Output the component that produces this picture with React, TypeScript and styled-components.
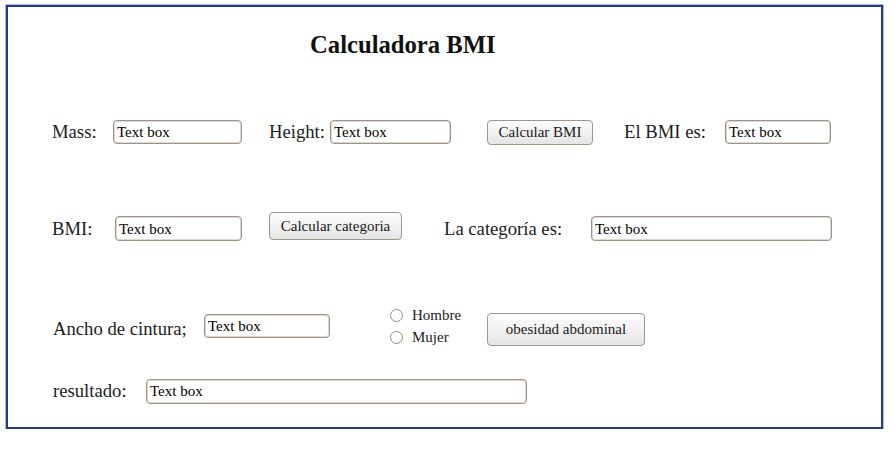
import { FC } from 'react';
import styled, { createGlobalStyle } from 'styled-components';

const GlobalStyle = createGlobalStyle`
  body {
    margin: 0;
    background: #fff;
    font-family: 'Liberation Serif', 'Times New Roman', serif;
    color: #1a1a1a;
  }
`;

const Frame = styled.div`
  box-sizing: border-box;
  margin: 5px 0 0 6px;
  width: 877px;
  height: 424px;
  border: 2px solid #223c8c;
  box-shadow: 0 0 0 0.6px #7e8fc2;
  display: flex;
  flex-direction: column;
`;

const Title = styled.h1`
  margin: 23px 0 0;
  padding-left: 302px;
  height: 30px;
  line-height: 30px;
  font-size: 24.67px;
  font-weight: bold;
  color: #111;
`;

const Row = styled.div<{ $top: number; $h: number }>`
  display: flex;
  align-items: center;
  margin-top: ${(p) => p.$top}px;
  height: ${(p) => p.$h}px;
`;

const Label = styled.span<{ $ml?: number; $w: number; $drop?: number }>`
  flex: none;
  margin-left: ${(p) => p.$ml ?? 0}px;
  width: ${(p) => p.$w}px;
  padding-top: ${(p) => p.$drop ?? 0}px;
  font-size: 18.67px;
  color: #1c1c1c;
  white-space: nowrap;
`;

const TextBox = styled.input<{ $ml?: number; $w: number; $h?: number }>`
  flex: none;
  box-sizing: border-box;
  margin: 0 0 0 ${(p) => p.$ml ?? 0}px;
  width: ${(p) => p.$w}px;
  height: ${(p) => p.$h ?? 24}px;
  padding: 1px 3px 0;
  border: 1px solid #9d9387;
  border-radius: 4px;
  box-shadow: inset 0 0 0 1px #ddd8d1;
  background: #fff;
  font-family: 'Liberation Serif', 'Times New Roman', serif;
  font-size: 15px;
  color: #000;
  outline: none;
`;

const Button = styled.button<{ $ml?: number; $w: number; $h: number; $dy?: number }>`
  flex: none;
  box-sizing: border-box;
  margin: ${(p) => p.$dy ?? 0}px 0 0 ${(p) => p.$ml ?? 0}px;
  width: ${(p) => p.$w}px;
  height: ${(p) => p.$h}px;
  padding: 0;
  border: 1px solid #a0968a;
  border-radius: 4px;
  background: linear-gradient(#fdfdfd, #e4e4e4);
  font-family: 'Liberation Serif', 'Times New Roman', serif;
  font-size: 15px;
  color: #1a1a1a;
  cursor: pointer;
`;

const RadioGroup = styled.div<{ $ml: number; $w: number }>`
  flex: none;
  margin-left: ${(p) => p.$ml}px;
  width: ${(p) => p.$w}px;
  display: flex;
  flex-direction: column;
`;

const RadioRow = styled.label`
  display: flex;
  align-items: center;
  gap: 9px;
  height: 22px;
  font-size: 15px;
  color: #1a1a1a;
`;

const Radio = styled.input`
  appearance: none;
  margin: 0 0 0 1px;
  width: 13px;
  height: 13px;
  border: 1px solid #938c84;
  border-radius: 50%;
  background: #fff;
`;

const App: FC = () => {
  return (
    <>
      <GlobalStyle />
      <Frame>
        <Title>Calculadora BMI</Title>

        <Row $top={59} $h={26}>
          <Label $ml={44} $w={61}>Mass:</Label>
          <TextBox $w={129} defaultValue="Text box" />
          <Label $ml={27} $w={61}>Height:</Label>
          <TextBox $w={121} defaultValue="Text box" />
          <Button $ml={36} $w={106} $h={25}>Calcular BMI</Button>
          <Label $ml={31} $w={101}>El BMI es:</Label>
          <TextBox $w={106} defaultValue="Text box" />
        </Row>

        <Row $top={69} $h={29}>
          <Label $ml={44} $w={63}>BMI:</Label>
          <TextBox $w={127} $h={25} defaultValue="Text box" />
          <Button $ml={27} $w={133} $h={28} $dy={-5}>Calcular categoria</Button>
          <Label $ml={42} $w={147}>La categoría es:</Label>
          <TextBox $w={241} $h={25} defaultValue="Text box" />
        </Row>

        <Row $top={63} $h={40}>
          <Label $ml={45} $w={151} $drop={6}>Ancho de cintura;</Label>
          <TextBox $w={126} defaultValue="Text box" />
          <RadioGroup $ml={59} $w={98}>
            <RadioRow>
              <Radio type="radio" name="sexo" />
              Hombre
            </RadioRow>
            <RadioRow>
              <Radio type="radio" name="sexo" />
              Mujer
            </RadioRow>
          </RadioGroup>
          <Button $w={158} $h={33} $dy={6}>obesidad abdominal</Button>
        </Row>

        <Row $top={32} $h={26}>
          <Label $ml={45} $w={93}>resultado:</Label>
          <TextBox $w={381} $h={25} defaultValue="Text box" />
        </Row>
      </Frame>
    </>
  );
};

export default App;
